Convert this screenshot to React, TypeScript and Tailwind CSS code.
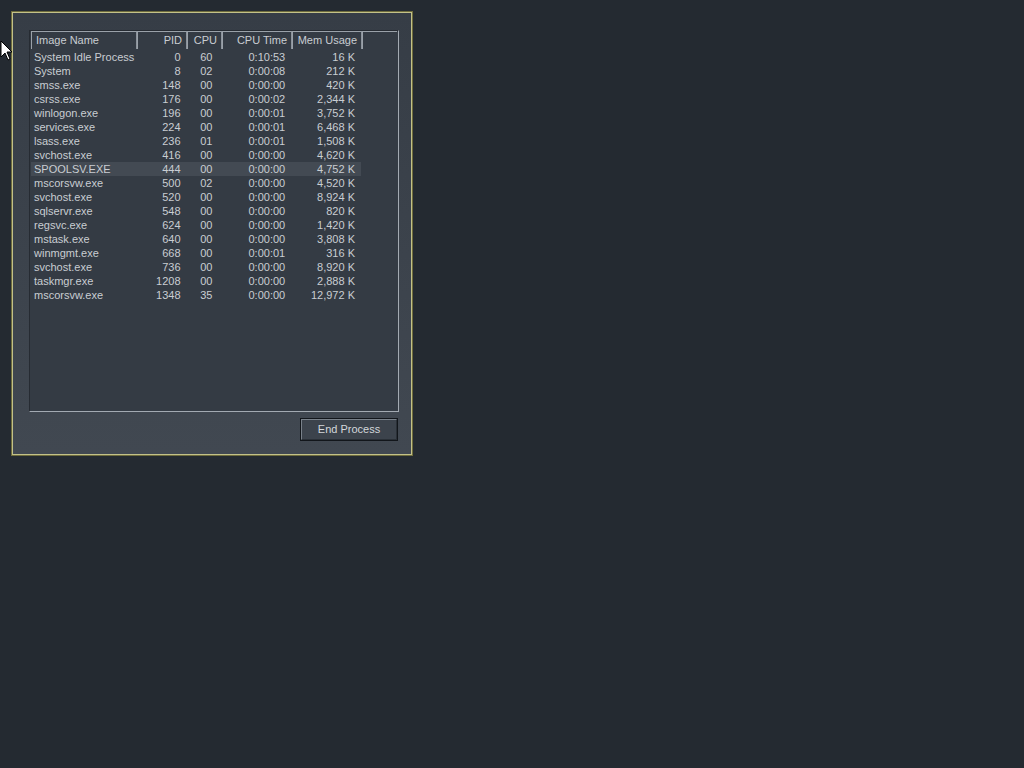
import React from 'react';

type Proc = { name: string; pid: number; cpu: string; time: string; mem: string };

const procs: Proc[] = [
  { name: 'System Idle Process', pid: 0, cpu: '60', time: '0:10:53', mem: '16 K' },
  { name: 'System', pid: 8, cpu: '02', time: '0:00:08', mem: '212 K' },
  { name: 'smss.exe', pid: 148, cpu: '00', time: '0:00:00', mem: '420 K' },
  { name: 'csrss.exe', pid: 176, cpu: '00', time: '0:00:02', mem: '2,344 K' },
  { name: 'winlogon.exe', pid: 196, cpu: '00', time: '0:00:01', mem: '3,752 K' },
  { name: 'services.exe', pid: 224, cpu: '00', time: '0:00:01', mem: '6,468 K' },
  { name: 'lsass.exe', pid: 236, cpu: '01', time: '0:00:01', mem: '1,508 K' },
  { name: 'svchost.exe', pid: 416, cpu: '00', time: '0:00:00', mem: '4,620 K' },
  { name: 'SPOOLSV.EXE', pid: 444, cpu: '00', time: '0:00:00', mem: '4,752 K' },
  { name: 'mscorsvw.exe', pid: 500, cpu: '02', time: '0:00:00', mem: '4,520 K' },
  { name: 'svchost.exe', pid: 520, cpu: '00', time: '0:00:00', mem: '8,924 K' },
  { name: 'sqlservr.exe', pid: 548, cpu: '00', time: '0:00:00', mem: '820 K' },
  { name: 'regsvc.exe', pid: 624, cpu: '00', time: '0:00:00', mem: '1,420 K' },
  { name: 'mstask.exe', pid: 640, cpu: '00', time: '0:00:00', mem: '3,808 K' },
  { name: 'winmgmt.exe', pid: 668, cpu: '00', time: '0:00:01', mem: '316 K' },
  { name: 'svchost.exe', pid: 736, cpu: '00', time: '0:00:00', mem: '8,920 K' },
  { name: 'taskmgr.exe', pid: 1208, cpu: '00', time: '0:00:00', mem: '2,888 K' },
  { name: 'mscorsvw.exe', pid: 1348, cpu: '35', time: '0:00:00', mem: '12,972 K' },
];

const selected = 8;

const HeaderCell = ({ w, align, children }: { w: string; align: string; children?: React.ReactNode }) => (
  <div className={`${w} h-full flex items-center whitespace-nowrap ${align} border-t border-l border-r border-t-[#9aa1a9] border-l-[#9aa1a9] border-r-[#8c939b] px-[4px] pb-px`}>
    {children}
  </div>
);

export default function App() {
  return (
    <div className="relative w-[1024px] h-[768px] bg-[#242a31] pl-[11px] pt-[11px] text-[11px] text-[#c9cdd2]" style={{ fontFamily: '"Liberation Sans", Arial, sans-serif' }}>
      {/* window */}
      <div className="w-[402px] h-[445px] border border-[#6e6c3c]">
        <div className="w-full h-full border border-[#c3c189] bg-gradient-to-b from-[#363d46] to-[#414851] pl-[16px] pt-[17px] flex flex-col">
          {/* process list */}
          <div className="w-[370px] h-[382px] border border-t-[#262b32] border-l-[#262b32] border-b-[#a3aab2] border-r-[#a3aab2] bg-[#343b44] pl-px">
            <div className="flex h-[18px] leading-none">
              <HeaderCell w="w-[106px]" align="justify-start">Image Name</HeaderCell>
              <HeaderCell w="w-[50px]" align="justify-end">PID</HeaderCell>
              <HeaderCell w="w-[35px]" align="justify-end">CPU</HeaderCell>
              <HeaderCell w="w-[70px]" align="justify-end">CPU Time</HeaderCell>
              <HeaderCell w="w-[70px]" align="justify-end">Mem Usage</HeaderCell>
              <div className="w-[35px] h-full border-t border-l border-t-[#9aa1a9] border-l-[#9aa1a9]" />
            </div>
            <div className="mt-px">
              {procs.map((p, i) => (
                <div
                  key={i}
                  className={`flex w-[330px] h-[14px] items-center leading-none whitespace-nowrap ${i === selected ? 'bg-[#434a53]' : ''}`}
                >
                  <div className="w-[106px] pl-[3px]">{p.name}</div>
                  <div className="w-[50px] pr-[6px] text-right">{p.pid}</div>
                  <div className="w-[35px] pr-[9px] text-right">{p.cpu}</div>
                  <div className="w-[70px] pr-[6px] text-right">{p.time}</div>
                  <div className="w-[70px] pr-[6px] text-right">{p.mem}</div>
                </div>
              ))}
            </div>
          </div>
          {/* buttons */}
          <div className="flex justify-end w-[370px] mt-[6px]">
            <button className="w-[98px] h-[23px] border border-[#12161b] bg-[#3c434c] text-[#d3d7db] text-[11px] mr-px">
              <div className="w-full h-full border border-t-[#79818a] border-l-[#79818a] border-b-[#2a3037] border-r-[#2a3037] flex items-center justify-center">
                End Process
              </div>
            </button>
          </div>
        </div>
      </div>

      {/* mouse cursor */}
      <svg className="absolute left-0 top-[40px]" width="14" height="22" viewBox="0 0 14 22">
        <path d="M1 1 L1 17 L5 13 L8 20 L10 19 L7 12 L12 12 Z" fill="#ffffff" stroke="#000000" strokeWidth="1" />
      </svg>
    </div>
  );
}
